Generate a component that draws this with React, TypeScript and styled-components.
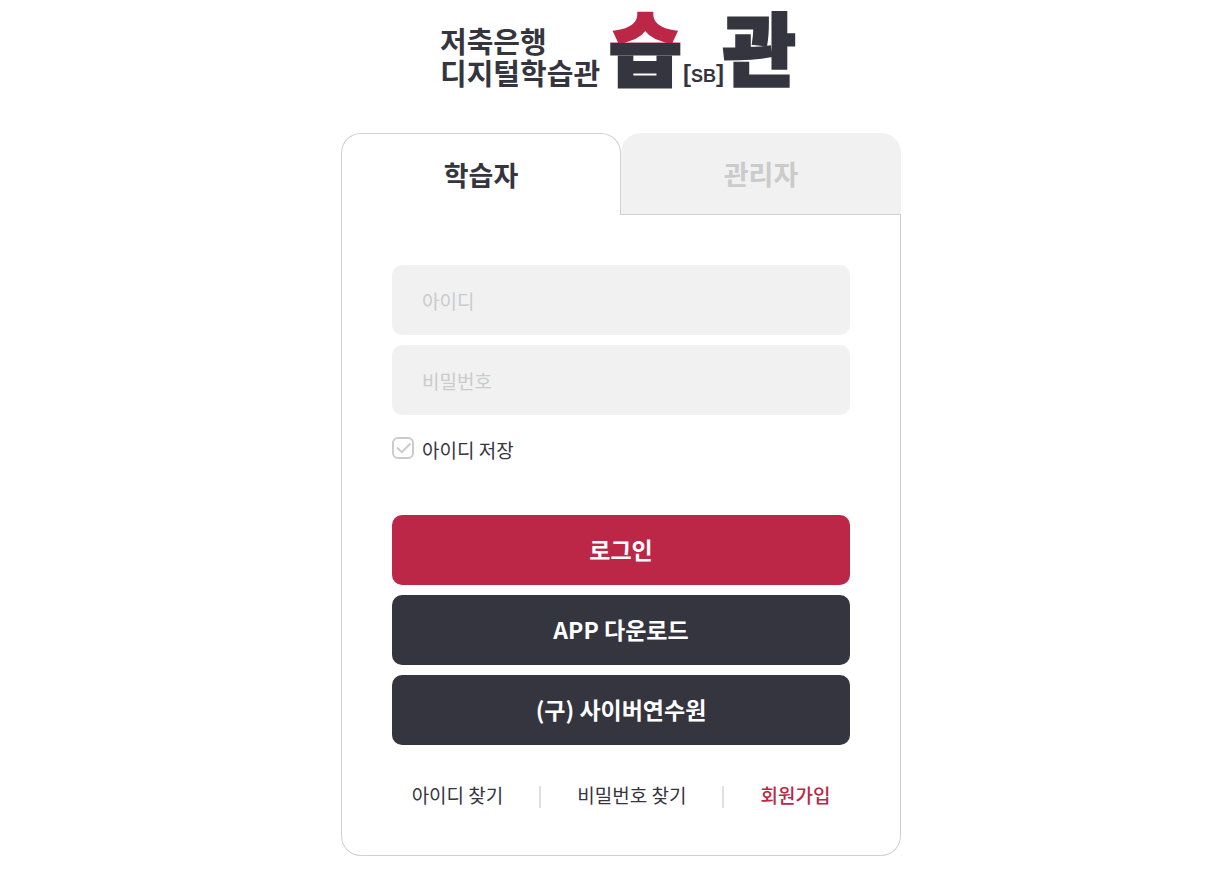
import React, { useState } from "react";
import styled, { createGlobalStyle } from "styled-components";

const ink = "#35353f";
const red = "#bc2747";
const line = "#d0d0d6";
const fill = "#f1f1f1";
const muted = "#cbcbcb";
const sans = '"Noto Sans CJK KR", "Noto Sans", sans-serif';

const GlobalStyle = createGlobalStyle`
  *, *::before, *::after { box-sizing: border-box; }
  body { margin: 0; background: #fff; color: ${ink}; font-family: ${sans}; }
  button, input { font-family: inherit; }
`;

const Page = styled.main`
  display: flex;
  flex-direction: column;
  align-items: center;
  gap: 40px;
  padding: 8px 0 14px 33px;
`;

const Brand = styled.h1`
  margin: 0;
  height: 85px;
`;

const LogoSvg = styled.svg`
  display: block;
  overflow: visible;
`;

const Card = styled.section`
  width: 100%;
  max-width: 560px;
`;

const Tabs = styled.div`
  display: grid;
  grid-template-columns: 1fr 1fr;
`;

const Tab = styled.button<{ $active: boolean }>`
  height: 82px;
  padding: 0;
  border: 0 solid ${line};
  border-width: ${(p) => (p.$active ? "1px 1px 0" : "0 0 1px")};
  border-radius: 20px 20px 0 0;
  background: ${(p) => (p.$active ? "#fff" : fill)};
  color: ${(p) => (p.$active ? ink : muted)};
  font-size: 27px;
  font-weight: 700;
  line-height: 40px;
  cursor: pointer;
`;

const Panel = styled.form`
  display: flex;
  flex-direction: column;
  padding: 50px 50px 45px;
  border: 1px solid ${line};
  border-top: 0;
  border-radius: 0 0 20px 20px;
`;

const Stack = styled.div`
  display: flex;
  flex-direction: column;
  gap: 10px;
`;

const Field = styled.input`
  width: 100%;
  height: 70px;
  padding: 0 30px;
  border: 0;
  border-radius: 10px;
  background: ${fill};
  color: ${ink};
  font-size: 19px;
  &::placeholder { color: ${muted}; opacity: 1; }
`;

const Remember = styled.label`
  display: flex;
  align-items: center;
  align-self: flex-start;
  gap: 8px;
  margin: 21px 0 51px;
  font-size: 19px;
  line-height: 28px;
`;

const CheckWrap = styled.span`
  display: grid;
  width: 22px;
  height: 22px;
  margin-bottom: 4px;
  > * { grid-area: 1 / 1; }
`;

const Check = styled.input`
  appearance: none;
  width: 22px;
  height: 22px;
  margin: 0;
  border: 2px solid ${muted};
  border-radius: 6px;
  background: #fff;
  &:checked { border-color: ${red}; }
  &:checked + svg { stroke: ${red}; }
`;

const Tick = styled.svg`
  fill: none;
  stroke: ${muted};
  stroke-width: 2;
  pointer-events: none;
`;

const Action = styled.button<{ $primary?: boolean }>`
  height: 70px;
  padding: 0 0 2px;
  border: 0;
  border-radius: 10px;
  background: ${(p) => (p.$primary ? red : ink)};
  color: #fff;
  font-size: 23px;
  font-weight: 700;
  cursor: pointer;
`;

const Links = styled.nav`
  display: flex;
  justify-content: center;
  align-items: center;
  gap: 36px;
  margin-top: 35px;
`;

const TextLink = styled.a<{ $strong?: boolean }>`
  color: ${(p) => (p.$strong ? red : ink)};
  font-size: 19px;
  font-weight: ${(p) => (p.$strong ? 500 : 400)};
  line-height: 30px;
  text-decoration: none;
  white-space: nowrap;
`;

const Divider = styled.span`
  width: 2px;
  height: 22px;
  margin-top: 4px;
  background: #dfdfe6;
`;

function Logo() {
  return (
    <LogoSvg width="360" height="85" viewBox="0 0 360 85" fill={ink} fontFamily={sans} fontWeight={700}>
      <defs>
        <linearGradient id="roof" gradientUnits="userSpaceOnUse" x1="0" y1="0" x2="0" y2="85">
          <stop offset="0.41" stopColor={red} />
          <stop offset="0.41" stopColor={ink} />
        </linearGradient>
      </defs>
      <text x="-1" y="45" fontSize="29">저축은행</text>
      <text x="-1" y="77" fontSize="29">디지털학습관</text>
      <text x="168" y="72" fontSize="79" fontWeight={900} fill="url(#roof)" stroke="url(#roof)" strokeWidth="3">습</text>
      <text x="242" y="74" fontSize="24" fontFamily='"Liberation Sans", Arial, sans-serif'>
        [<tspan fontSize="18">SB</tspan>]
      </text>
      <text x="282" y="72" fontSize="79" fontWeight={900} stroke={ink} strokeWidth="3">관</text>
    </LogoSvg>
  );
}

export default function App() {
  const [tab, setTab] = useState(0);
  return (
    <>
      <GlobalStyle />
      <Page>
        <Brand><Logo /></Brand>
        <Card>
          <Tabs role="tablist">
            {["학습자", "관리자"].map((name, i) => (
              <Tab key={name} type="button" role="tab" aria-selected={tab === i} $active={tab === i} onClick={() => setTab(i)}>
                {name}
              </Tab>
            ))}
          </Tabs>
          <Panel onSubmit={(e) => e.preventDefault()}>
            <Stack>
              <Field type="text" placeholder="아이디" aria-label="아이디" />
              <Field type="password" placeholder="비밀번호" aria-label="비밀번호" />
            </Stack>
            <Remember>
              <CheckWrap>
                <Check type="checkbox" />
                <Tick width="22" height="22" viewBox="0 0 22 22" aria-hidden="true">
                  <path d="M5 10.5L9.8 15.2L18.5 6.5" />
                </Tick>
              </CheckWrap>
              아이디 저장
            </Remember>
            <Stack>
              <Action type="submit" $primary>로그인</Action>
              <Action type="button">APP 다운로드</Action>
              <Action type="button">(구) 사이버연수원</Action>
            </Stack>
            <Links>
              <TextLink href="#find-id">아이디 찾기</TextLink>
              <Divider />
              <TextLink href="#find-password">비밀번호 찾기</TextLink>
              <Divider />
              <TextLink href="#join" $strong>회원가입</TextLink>
            </Links>
          </Panel>
        </Card>
      </Page>
    </>
  );
}
